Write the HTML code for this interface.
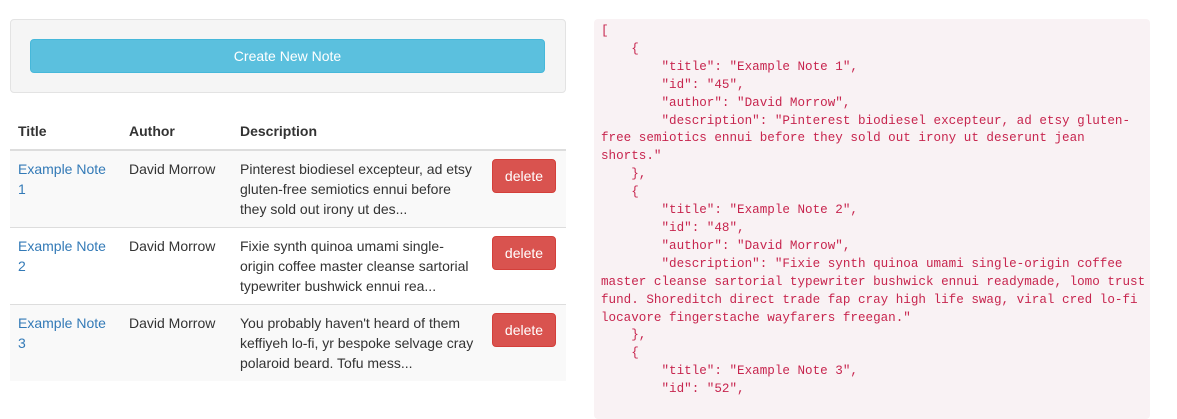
<!DOCTYPE html>
<html><head><style>
*{margin:0;padding:0;box-sizing:border-box}
body{width:1177px;height:402px;background:#fff;font-family:"Liberation Sans",Arial,sans-serif;font-size:14px;color:#333;position:relative;overflow:hidden}
.well{position:absolute;left:10px;top:19px;width:556px;height:74px;background:#f5f5f5;border:1px solid #e3e3e3;border-radius:4px}
.btn{position:absolute;left:30px;top:39px;width:515px;height:34px;background:#5bc0de;border:1px solid #46b8da;border-radius:4px;color:#fff;text-align:center;line-height:32px;font-size:14px}
.th{position:absolute;top:123px;font-weight:bold}
.hline{position:absolute;left:10px;width:556px;height:2px;background:#ddd;top:149px}
.row{position:absolute;left:10px;width:556px;height:77px;background:#f9f9f9;border-top:1px solid #ddd}
.row div{position:absolute;top:8px;line-height:20px}
.t{left:8px;width:100px;color:#337ab7}
.a{left:119px}
.d{left:230px;width:238px}
.del{position:absolute;left:482px!important;top:8px!important;width:64px;height:34px;background:#d9534f;border:1px solid #d43f3a;border-radius:4px;color:#fff;text-align:center;line-height:32px!important}
pre{position:absolute;left:594px;top:19px;width:556px;height:400px;background:#f9f2f4;border-radius:4px;color:#c7254e;font-family:"Liberation Mono",monospace;font-size:12.6px;line-height:17.9px;padding:4px 7px;white-space:pre}
</style></head><body>
<div class="well"></div>
<div class="btn">Create New Note</div>
<div class="th" style="left:18px">Title</div>
<div class="th" style="left:129px">Author</div>
<div class="th" style="left:240px">Description</div>
<div class="row" style="top:151px;border-top:none"><div class="t">Example Note<br>1</div><div class="a">David Morrow</div><div class="d">Pinterest biodiesel excepteur, ad etsy gluten-free semiotics ennui before they sold out irony ut des...</div><div class="del">delete</div></div>
<div class="row" style="top:227px;background:#fff"><div class="t">Example Note<br>2</div><div class="a">David Morrow</div><div class="d">Fixie synth quinoa umami single-origin coffee master cleanse sartorial typewriter bushwick ennui rea...</div><div class="del">delete</div></div>
<div class="row" style="top:304px"><div class="t">Example Note<br>3</div><div class="a">David Morrow</div><div class="d">You probably haven't heard of them keffiyeh lo-fi, yr bespoke selvage cray polaroid beard. Tofu mess...</div><div class="del">delete</div></div>
<div class="hline"></div>
<pre>[
    {
        "title": "Example Note 1",
        "id": "45",
        "author": "David Morrow",
        "description": "Pinterest biodiesel excepteur, ad etsy gluten-
free semiotics ennui before they sold out irony ut deserunt jean
shorts."
    },
    {
        "title": "Example Note 2",
        "id": "48",
        "author": "David Morrow",
        "description": "Fixie synth quinoa umami single-origin coffee
master cleanse sartorial typewriter bushwick ennui readymade, lomo trust
fund. Shoreditch direct trade fap cray high life swag, viral cred lo-fi
locavore fingerstache wayfarers freegan."
    },
    {
        "title": "Example Note 3",
        "id": "52",
</pre>
</body></html>
